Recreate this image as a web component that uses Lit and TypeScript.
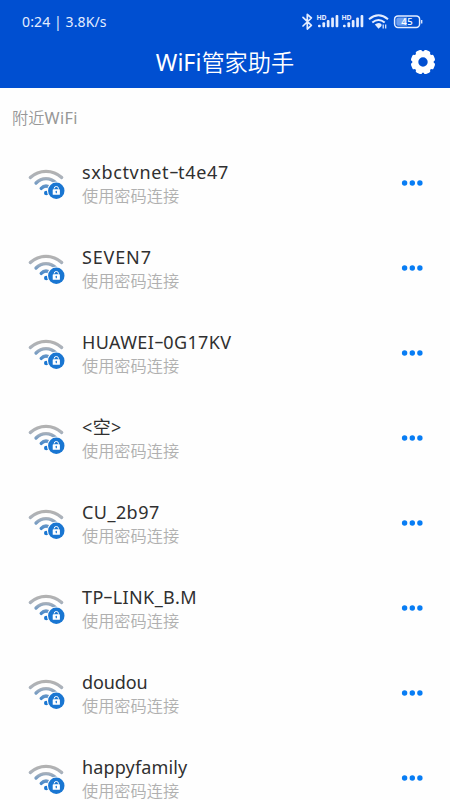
import { LitElement, html, css, svg } from "lit";
import { customElement, property } from "lit/decorators.js";

interface Network {
  name: string;
  tracking: number;
}

const NETWORKS: Network[] = [
  { name: "sxbctvnet-t4e47", tracking: 0.65 },
  { name: "SEVEN7", tracking: 0.85 },
  { name: "HUAWEI-0G17KV", tracking: 0.38 },
  { name: "<空>", tracking: 0.4 },
  { name: "CU_2b97", tracking: 0.45 },
  { name: "TP-LINK_B.M", tracking: 0.4 },
  { name: "doudou", tracking: -0.1 },
  { name: "happyfamily", tracking: 0.15 },
];

@customElement("status-bar")
export class StatusBar extends LitElement {
  static styles = css`
    :host {
      display: flex;
      justify-content: space-between;
      height: 36px;
      padding: 4px 26px 0 22px;
      color: #e4edff;
      box-sizing: content-box;
    }
    .clock {
      font-size: 14px;
      line-height: 36px;
      letter-spacing: 0.12px;
      white-space: pre;
    }
    .icons {
      display: block;
    }
    .hd {
      font: 700 6.8px "Noto Sans", sans-serif;
    }
    .level {
      font: 500 9.5px "Noto Sans", sans-serif;
    }
  `;

  private signal(x: number) {
    return svg`
      <text class="hd" x=${x - 1} y="15.6" fill="#e4edff" textLength="10">HD</text>
      <g fill="#e4edff">
        <rect x=${x + 0.6} y="20.7" width="2.7" height="2.6" rx="1"/>
        <rect x=${x + 5} y="18.3" width="2.7" height="5" rx="1"/>
        <rect x=${x + 9.4} y="16" width="2.7" height="7.3" rx="1"/>
        <rect x=${x + 13.8} y="13.6" width="2.7" height="9.7" rx="1"/>
        <rect x=${x + 18.2} y="11" width="2.7" height="12.3" rx="1"/>
      </g>`;
  }

  render() {
    return html`
      <span class="clock">0:24 | 3.8K/s</span>
      <svg class="icons" width="124" height="36" viewBox="0 0 124 36">
        <path d="M3 13.400L11.400 21.400L7.300 25V10.400L11.400 14L3 22" fill="none" stroke="#e4edff" stroke-width="1.700" stroke-linejoin="round" stroke-linecap="round"/>
        ${this.signal(17.4)}
        ${this.signal(42.4)}
        <g fill="none" stroke="#e4edff" stroke-width="2">
          <path d="M69 15.200Q78.500 7.400 88 15.200"/>
          <path d="M72.300 18.600Q78.500 13.400 84.700 18.600"/>
        </g>
        <path d="M74.800 20.600Q78.500 17.600 81.500 20.200V22L78.500 24.700Z" fill="#e4edff"/>
        <path d="M83.200 24.500V20.500M85.700 20.500V24.500" stroke="#e4edff" stroke-width="1.200"/>
        <rect x="94.600" y="11.900" width="25" height="11.600" rx="3.400" fill="none" stroke="#e4edff" stroke-width="1.500"/>
        <path d="M98 13.600H107V21.800H98Q96.300 21.800 96.300 20V15.600Q96.300 13.600 98 13.600Z" fill="#6c9ef0"/>
        <path d="M121.700 15.900V19.500" stroke="#e4edff" stroke-width="1.300"/>
        <text class="level" x="101.300" y="21.300" fill="#fff" textLength="11.500">45</text>
      </svg>
    `;
  }
}

@customElement("wifi-row")
export class WifiRow extends LitElement {
  @property({ attribute: false }) network!: Network;

  static styles = css`
    :host {
      display: flex;
      align-items: flex-start;
      height: 85px;
      padding: 0 22px 0 26px;
      box-sizing: border-box;
    }
    .signal {
      flex: none;
      margin-top: 24px;
      margin-right: 14px;
    }
    .labels {
      flex: 1;
      padding-top: 19px;
      white-space: nowrap;
    }
    .name {
      font-size: 18px;
      line-height: 24px;
      color: #303030;
    }
    .dash {
      display: inline-block;
      height: 24px;
      vertical-align: top;
      margin: 0 1.6px;
      letter-spacing: 0;
      transform: translateY(-1px) scaleX(1.7);
    }
    .hint {
      font-size: 16.2px;
      line-height: 24px;
      font-weight: 350;
      color: #b0b0b0;
    }
    .more {
      flex: none;
      margin-top: 38px;
    }
  `;

  private label() {
    const [head, tail] = this.network.name.split("-");
    return tail === undefined ? head : html`${head}<span class="dash">-</span>${tail}`;
  }

  render() {
    return html`
      <svg class="signal" width="42" height="36" viewBox="26 165 42 36">
        <defs>
          <linearGradient id="fade" gradientUnits="userSpaceOnUse" x1="0" y1="172" x2="0" y2="194">
            <stop offset="0" stop-color="#b2b2b2"/>
            <stop offset="0.250" stop-color="#abb2bb"/>
            <stop offset="1" stop-color="#1976d2"/>
          </linearGradient>
        </defs>
        <g fill="none" stroke="url(#fade)" stroke-width="3.300" stroke-linecap="round">
          <path d="M30.300 177.500Q37 171.300 46 171.300T61.700 177.500"/>
          <path d="M36 183Q40.200 178.700 46 178.700T56 183"/>
          <path d="M41.200 188.400Q43.400 186 46 186T51 188.400"/>
        </g>
        <circle cx="46.300" cy="193" r="2.300" fill="#1976d2"/>
        <circle cx="56.300" cy="190.800" r="9.400" fill="#fefefe"/>
        <circle cx="56.300" cy="190.800" r="8.200" fill="#1976d2"/>
        <rect x="52.700" y="189.300" width="7.200" height="5.500" rx="0.600" fill="#fff"/>
        <path d="M54.200 188.700V188.400A2.100 1.900 0 0 1 58.400 188.400V189.300" fill="none" stroke="#fff" stroke-width="1"/>
        <rect x="55.700" y="190.700" width="1.200" height="2.600" rx="0.500" fill="#1976d2"/>
      </svg>
      <div class="labels">
        <div class="name" style="letter-spacing:${this.network.tracking}px">${this.label()}</div>
        <div class="hint">使用密码连接</div>
      </div>
      <svg class="more" width="28" height="8" viewBox="400 179 28 8">
        <g fill="#087df4">
          <circle cx="404.600" cy="183" r="2.700"/>
          <circle cx="412.300" cy="183" r="2.700"/>
          <circle cx="419.900" cy="183" r="2.700"/>
        </g>
      </svg>
    `;
  }
}

@customElement("app-root")
export class AppRoot extends LitElement {
  static styles = css`
    :host {
      display: block;
      height: 800px;
      overflow: hidden;
      background: #fefefe;
      font-family: "Noto Sans", "Noto Sans CJK SC", sans-serif;
    }
    .header {
      height: 88px;
      background: #004fd1;
    }
    .bar {
      display: grid;
      grid-template-columns: 1fr auto 1fr;
      align-items: center;
      height: 44px;
      color: #fff;
    }
    .title {
      grid-column: 2;
      margin: 0;
      font-size: 23.2px;
      font-weight: 350;
      line-height: 43px;
      white-space: nowrap;
    }
    .brand {
      font-weight: 400;
    }
    .gear {
      justify-self: end;
      margin-right: 14px;
    }
    .section {
      height: 53px;
      padding: 18px 12px 0;
      box-sizing: border-box;
      font-size: 16.2px;
      font-weight: 350;
      line-height: 24px;
      color: #979797;
    }
    .wide {
      font-weight: 400;
      letter-spacing: 0.45px;
    }
  `;

  private gear() {
    const teeth = Array.from({ length: 8 }, (_, i) => i * 45 + 22.5);
    return html`
      <svg class="gear" width="26" height="26" viewBox="-13 -13 26 26">
        ${teeth.map((a) => svg`<rect x="-3.400" y="-12.200" width="6.800" height="6" rx="1.800" fill="#fff" transform="rotate(${a})"/>`)}
        <circle r="7.700" fill="none" stroke="#fff" stroke-width="6"/>
      </svg>`;
  }

  render() {
    return html`
      <div class="header">
        <status-bar></status-bar>
        <div class="bar">
          <h1 class="title"><span class="brand">WiFi</span>管家助手</h1>
          ${this.gear()}
        </div>
      </div>
      <div class="section">附近<span class="wide">WiFi</span></div>
      ${NETWORKS.map((n) => html`<wifi-row .network=${n}></wifi-row>`)}
    `;
  }
}
